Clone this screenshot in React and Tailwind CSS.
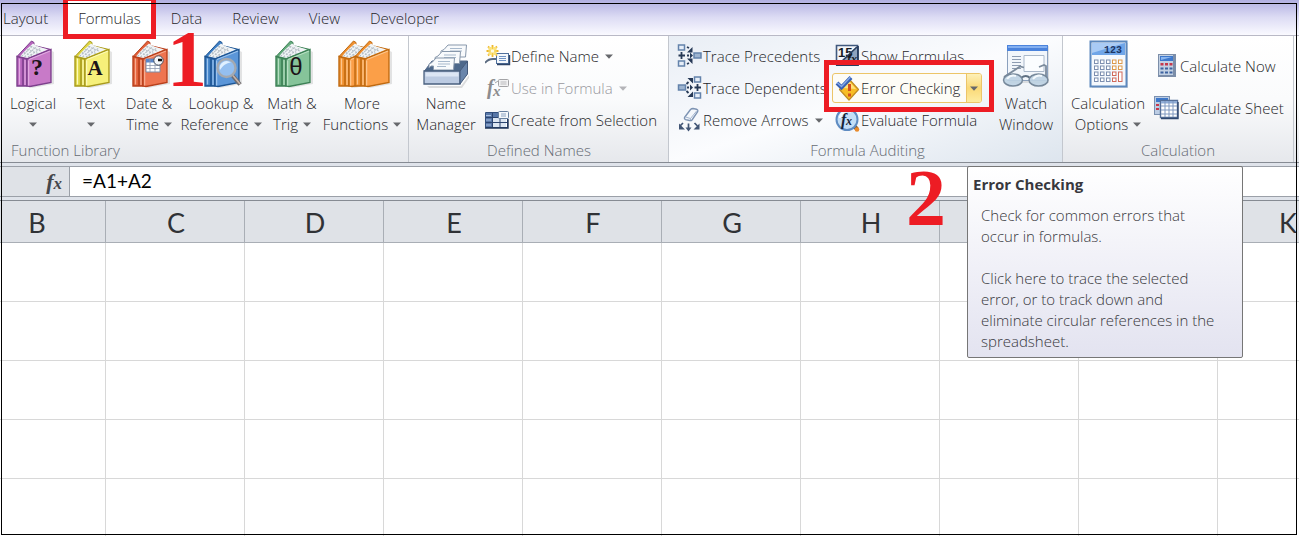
import React from "react";

function Arrow({ muted }) {
  return (
    <svg width="8" height="5" viewBox="0 0 8 5" className="shrink-0" aria-hidden="true">
      <path d="M0 0.5h8L4 4.8z" fill={muted ? "#b4b4b8" : "#66686c"} />
    </svg>
  );
}

/* ---------- large icons ---------- */

function BookShape({ c, dx = 0 }) {
  return (
    <g transform={`translate(${dx} 0)`}>
      <path d="M14 48l22-4.5V12l2 1v32l-22 4z" fill="#000" opacity=".1" />
      <path d="M1 17.500L15.500 2l2.500 1.500v3L35 10.500 11 20z" fill={c.mid} stroke={c.dark} strokeWidth="1" />
      <path d="M4 17.500C8 12 13 8 17 4.500c3 2.500 8 4 15 6L12 19z" fill="#f1f4f6" />
      <path d="M5.500 17.500L17 6.500M8.500 18L21 7.500M12 18L25 9M14 7.500l12 5M11 10.500l11 4M8 13.500l9 3.500" stroke="#b4bdc4" strokeWidth="1.100" strokeDasharray="2 1.200" fill="none" />
      <path d="M1 17.500l10 2.500v27L1 47z" fill={c.mid} stroke={c.dark} strokeWidth="1.400" />
      <path d="M11 20l24-9.500v33L14 47.500l-3-.5z" fill={c.fill} stroke={c.dark} strokeWidth="1.400" />
      <path d="M13 20.500l21-8.500" stroke={c.light} strokeWidth="1.200" fill="none" />
      <path d="M7 19.500V47" stroke={c.dark} strokeWidth="1.600" />
      <path d="M3.500 19.500v26M9 21v25M12.600 21.500v25" stroke={c.light} strokeWidth="1.300" />
    </g>
  );
}

const purple = { dark: "#7c3f8c", mid: "#b765bd", fill: "#c87ac8", light: "#e2a9e2" };
const yellow = { dark: "#a89a1c", mid: "#ddd544", fill: "#f6f07a", light: "#fdfbb8" };
const red = { dark: "#b8401c", mid: "#e2603a", fill: "#ee7450", light: "#f8ab8e" };
const blue = { dark: "#1e5593", mid: "#3f7fc4", fill: "#5b96d8", light: "#9cc4ee" };
const green = { dark: "#3c8055", mid: "#65ab7d", fill: "#86c49a", light: "#b6dfc2" };
const orange = { dark: "#c06a10", mid: "#ef9030", fill: "#fb9f48", light: "#fdc68c" };

function Book({ colors, children }) {
  return (
    <svg width="38" height="50" viewBox="-2 0 38 50" overflow="visible" aria-hidden="true">
      <BookShape c={colors} />
      {children}
    </svg>
  );
}

const Glyph = ({ children, family, size = 24, weight = 700 }) => (
  <text x="21" y="36" fontSize={size} fontWeight={weight} fontFamily={family} textAnchor="middle" fill="#1c1418">{children}</text>
);

const LogicalIcon = () => <Book colors={purple}><Glyph family="Liberation Serif, serif">?</Glyph></Book>;
const TextIcon = () => <Book colors={yellow}><Glyph family="Liberation Serif, serif" size={21}>A</Glyph></Book>;
const MathIcon = () => <Book colors={green}><Glyph family="Liberation Sans, sans-serif" weight={400}>θ</Glyph></Book>;

const DateIcon = () => (
  <Book colors={red}>
    <path d="M14 20h14v13H14z" fill="#fff" stroke="#7d8ba6" />
    <path d="M14 20h13v3.500H14z" fill="#5b86c8" />
    <path d="M14 26.500h14M14 29.500h14M18 20v13M23 20v13" stroke="#8f9bb0" strokeWidth=".8" />
    <circle cx="26.500" cy="21.500" r="4.700" fill="#f4f7fb" stroke="#46505f" strokeWidth="1" />
    <path d="M26 21h4" stroke="#111" strokeWidth="2.500" fill="none" />
  </Book>
);

const LookupIcon = () => (
  <Book colors={blue}>
    <path d="M28.500 36.500l7.500 9" stroke="#6c6c70" strokeWidth="4" />
    <path d="M29 36.500l7 8.500" stroke="#c9b3a8" strokeWidth="1.600" />
    <circle cx="22.500" cy="29" r="9" fill="#9ac3f3" fillOpacity=".9" stroke="#a4a9b0" strokeWidth="2.400" />
    <path d="M16 31a7 7 0 0 1 11-7.500c-5 .5-8 3-11 7.500z" fill="#e0f0ff" />
  </Book>
);

const MoreIcon = () => (
  <svg width="52" height="50" viewBox="0 0 52 50" overflow="visible" aria-hidden="true">
    <BookShape c={orange} dx={2} />
    <BookShape c={orange} dx={18} />
  </svg>
);

const NameManagerIcon = () => (
  <svg width="46" height="50" viewBox="0 0 46 50" aria-hidden="true">
    <path d="M4 47h34l8-11v3l-7 10H6z" fill="#000" opacity=".12" />
    <path d="M1.500 32L9 22h35.500L37 32z" fill="#4d688b" stroke="#52688a" />
    {[[23, 6], [17, 12.500], [11, 19]].map(([x, y]) => (
      <g key={x}>
        <path d={`M${x + 2} ${y}h18.500l-1 12h-20v-4h-2.500l-2 2v-4l3-1.500z`} fill="#f8fafc" stroke="#8797ab" />
        <path d={`M${x + 4} ${y + 3.500}h12M${x + 4} ${y + 6}h12M${x + 3} ${y + 8.500}h9`} stroke="#a8b9cc" />
      </g>
    ))}
    <path d="M1 32h36v13H1z" fill="#bccbe2" stroke="#4a607f" strokeWidth="1.300" />
    <path d="M2.500 33.500h33v4h-33z" fill="#dce6f4" />
    <path d="M37 32l7.500-10v13L37 45z" fill="#6985ab" stroke="#43597a" />
  </svg>
);

const WatchIcon = () => (
  <svg width="48" height="50" viewBox="0 0 48 50" aria-hidden="true">
    <path d="M7 7h40v37H7z" fill="#000" opacity=".1" />
    <path d="M5.500 6.500h40v35h-40z" fill="#f2f6fb" stroke="#8ba0bd" />
    <path d="M5 6h41v6H5z" fill="#4b83dc" />
    <path d="M6 7h39v2H6z" fill="#83aff0" />
    <path d="M10 17.500h9M10 20.500h9M10 23.500h9M10 26.500h9M10 29.500h9" stroke="#8d9cb2" />
    <path d="M22 16.500h20v16H22z" fill="#fbfdff" stroke="#aab8ca" />
    <path d="M2 38L18 27.500l4 1M44 38V27l-2-1-5 2" stroke="#7c8b9c" strokeWidth="1.800" fill="none" />
    <path d="M19 39q5-4 9 0" stroke="#5f7082" strokeWidth="1.800" fill="none" />
    <ellipse cx="11" cy="41" rx="9.500" ry="6" fill="#bcd1e2" fillOpacity=".9" stroke="#76889a" strokeWidth="1.500" />
    <ellipse cx="36.500" cy="41" rx="9.500" ry="6" fill="#bcd1e2" fillOpacity=".9" stroke="#76889a" strokeWidth="1.500" />
    <path d="M5 40q4-5 9-3M31 40q4-5 9-3" stroke="#f3f9fd" strokeWidth="2" fill="none" />
  </svg>
);

const CalcOptionsIcon = () => (
  <svg width="40" height="50" viewBox="-1 -1 40 50" aria-hidden="true">
    <path d="M3 3h36v45H3z" fill="#000" opacity=".12" />
    <path d="M1.500 1.500h36v45h-36z" fill="#f4f8fd" stroke="#5c88bd" strokeWidth="2" />
    <path d="M3 3h33v12H3z" fill="#6fa5e8" />
    <path d="M3 3h33L3 13z" fill="#a9cbf5" />
    <text x="33" y="13" fontSize="10" fontWeight="700" fontFamily="Liberation Mono, monospace" textAnchor="end" fill="#1d3765">123</text>
    {[0, 1, 2, 3].map((r) =>
      [0, 1, 2, 3, 4].map((k) =>
        k === 4 && r === 3 ? null : (
          <rect key={`${r}-${k}`} x={5.500 + k * 6} y={20 + r * 6} width="3.500" height={k === 4 && r === 2 ? 9.500 : 3.500} fill="#fff" stroke={k < 3 ? "#7d8fb0" : r < 2 ? "#dc9a4c" : "#d0695a"} />
        )
      )
    )}
  </svg>
);

/* ---------- small icons ---------- */

const Small = ({ children }) => (
  <svg width="26" height="26" viewBox="0 0 26 26" className="shrink-0" aria-hidden="true">{children}</svg>
);

const DefineIcon = () => (
  <Small>
    <path d="M0 20q3-4 8-4h3" stroke="#5b6b80" strokeWidth="1.800" fill="none" />
    <rect x="11.500" y="10.500" width="12" height="10" fill="#f4f8fc" stroke="#50709c" />
    <path d="M14 13.500h7M14 15.500h7M14 17.500h7" stroke="#6f93c4" />
    <path d="M12 21.500h12.500V12" stroke="#2d4468" fill="none" strokeWidth="1.400" />
    <path d="M7.500 2v12M1.500 8h12M3 3.500l9 9M12 3.500l-9 9" stroke="#edb72e" strokeWidth="1.800" />
    <path d="M3.500 4h8v8h-8z" fill="#fbe27a" />
    <path d="M7.500 4v8M3.500 8h8" stroke="#f3c945" />
    <circle cx="7.500" cy="8" r="1.800" fill="#fffbe0" />
  </Small>
);

const UseInFormulaIcon = () => (
  <Small>
    <text x="2" y="19" fontSize="20" fontStyle="italic" fontWeight="700" fontFamily="Liberation Serif, serif" fill="#8c8c8e">f</text>
    <text x="8" y="21" fontSize="15" fontStyle="italic" fontWeight="700" fontFamily="Liberation Serif, serif" fill="#8c8c8e">x</text>
    <rect x="13.500" y="4.500" width="10" height="7" rx="1" fill="#f2f2f3" stroke="#a3a3a6" />
    <path d="M15.500 7h6M15.500 9h6" stroke="#b9b9bc" />
    <path d="M10 8l3-2" stroke="#a3a3a6" />
  </Small>
);

const CreateIcon = () => (
  <Small>
    <path d="M0.500 5.500h22v15h-22z" fill="#fff" stroke="#324f7d" />
    <path d="M1 6h21v4H1zM1 6h6v14H1z" fill="#5877a8" />
    <path d="M8 11h13v9H8z" fill="#dce6f2" />
    <path d="M1 10.500h22M1 15.500h22M7.500 6v14M15 6v14" stroke="#2c4570" />
    <path d="M1 8.500h5M1 13h5M1 18h5" stroke="#aac0e0" />
    <rect x="13.500" y="4.500" width="10" height="7" rx="1" fill="#f5f8fb" stroke="#67809f" />
    <path d="M16 7h5M16 9h5" stroke="#8ba3c2" />
    <path d="M0 21h23v-9" stroke="#1e3458" strokeWidth="1.400" fill="none" />
  </Small>
);

const Sq = ({ x, y, w = 6, f = "#e6eef8" }) => (
  <rect x={x} y={y} width={w} height="5" fill={f} stroke="#6382ab" strokeWidth="1.500" />
);

const PrecedentsIcon = () => (
  <Small>
    <Sq x={1.500} y={2} /><Sq x={1.500} y={18} /><Sq x={17} y={10} w={7} f="#9db4d0" />
    <path d="M4.500 9v7M1.500 12.500h6.500" stroke="#263956" strokeWidth="1.800" />
    <path d="M10 4l2 1M10 21l2-1M10 12.500h2" stroke="#263956" strokeWidth="1.800" />
    <path d="M15.500 4v5.500H10zM15.500 21v-5.500H10zM13 9.500l3 3-3 3z" fill="#263956" />
  </Small>
);

const DependentsIcon = () => (
  <Small>
    <Sq x={17.500} y={2} /><Sq x={17.500} y={18} /><Sq x={1.500} y={10} w={7} f="#9db4d0" />
    <path d="M20.500 9v7M17.500 12.500h6.500" stroke="#263956" strokeWidth="1.800" />
    <path d="M9.500 9l2-2M9.500 16l2 2M10 12.500h2" stroke="#263956" strokeWidth="1.800" />
    <path d="M10.500 3H16v5.500zM10.500 22H16v-5.500zM13 9.500l3 3-3 3z" fill="#263956" />
  </Small>
);

const RemoveIcon = () => (
  <Small>
    <path d="M7.500 10.500L13.500 2.500q1-1 2.500-1l3.500.7q2 .8 1 2.800L15 13q-1 1-2.500.500l-4-.8q-1.500-.7-1-2.200z" fill="#f4f7fb" stroke="#7d93b3" strokeWidth="1.400" />
    <path d="M8.500 10l5 1.500 6.500-8M13.500 11.500v1.500" stroke="#a3b5cf" fill="none" />
    <path d="M6 16l-3 3M11.500 16.500v5M17.500 16l3 3" stroke="#415575" strokeWidth="1.700" />
    <path d="M2 16.500v6h6zM8.500 20.500h6l-3 4zM22.500 16.500v6h-6z" fill="#415575" />
  </Small>
);

const ShowIcon = () => (
  <Small>
    <path d="M1.500 2.500h21v19h-21z" fill="#f3f6fa" stroke="#40597e" strokeWidth="1.600" />
    <path d="M3 21L22 3v18z" fill="#8ea3bf" />
    <text x="3" y="14" fontSize="13" fontWeight="700" fontFamily="Liberation Sans, sans-serif" fill="#171b22">15</text>
    <path d="M4 21L22 4" stroke="#2b3f5e" strokeWidth="1.600" />
    <text x="12" y="20" fontSize="12" fontWeight="700" fontStyle="italic" fontFamily="Liberation Serif, serif" fill="#171b22">fx</text>
    <path d="M1 22h22V3" stroke="#273d60" strokeWidth="1.800" fill="none" />
  </Small>
);

const ErrorIcon = () => (
  <Small>
    <path d="M14 4l9.500 10.500L14 25 4.500 14.500z" fill="#f8bd25" stroke="#c08c22" strokeWidth="1.200" strokeLinejoin="round" />
    <path d="M14 6l7 8-13-1z" fill="#ffe27a" />
    <path d="M14.500 9v7M14.500 18.500v3" stroke="#d2501e" strokeWidth="3" />
    <path d="M2 8l4.500 4.500L16 2.500" stroke="#3a62b4" strokeWidth="4" fill="none" />
    <path d="M2 7.500l4.500 4L15.500 2" stroke="#85a9e8" strokeWidth="1.400" fill="none" />
  </Small>
);

const EvaluateIcon = () => (
  <Small>
    <path d="M18 18l4 4" stroke="#8a5a28" strokeWidth="4" />
    <circle cx="22" cy="22.500" r="2.300" fill="#e98b2c" />
    <circle cx="12" cy="12.500" r="10.500" fill="#c4def6" stroke="#5f8cc2" strokeWidth="2" />
    <path d="M5 11a7.500 7.500 0 0 1 11-6" stroke="#f6fbff" strokeWidth="2.500" fill="none" />
    <text x="6" y="18" fontSize="16" fontStyle="italic" fontWeight="700" fontFamily="Liberation Serif, serif" fill="#15233a">f</text>
    <text x="11" y="18" fontSize="12" fontStyle="italic" fontWeight="700" fontFamily="Liberation Serif, serif" fill="#15233a">x</text>
  </Small>
);

const CalcNowIcon = () => (
  <Small>
    <path d="M4 1h18v23H4z" fill="#7c8ea9" />
    <path d="M5 2h14v20H5z" fill="#c3d1e3" />
    <path d="M6 3h13v5H6z" fill="#3d78cc" />
    <path d="M7 4h11L7 7z" fill="#8bb6ee" />
    <path d="M6.500 10h3v2.500h-3zM11 10h3v2.500h-3zM15.500 10h3v2.500h-3z" fill="#c5384c" />
    <path d="M6.500 14.500h3v2h-3zM11 14.500h3v2h-3zM15.500 14.500h3v2h-3zM6.500 18.500h3v2h-3zM11 18.500h3v2h-3zM15.500 18.500h3v2h-3z" fill="#3c62a0" />
  </Small>
);

const CalcSheetIcon = () => (
  <Small>
    <path d="M0 1h16v19H0z" fill="#7a90b0" />
    <path d="M1 2h14v17H1z" fill="#bccde4" />
    <path d="M2 3h12v4H2z" fill="#3d78cc" />
    <path d="M2 9h3v2H2zM2 13h3v2H2z" fill="#c5384c" />
    <path d="M6.500 5.500h17v17h-17z" fill="#fff" stroke="#567099" strokeWidth="1.400" />
    <path d="M7 6h16v2.500H7z" fill="#8facd6" />
    <path d="M7 11h16M7 15h16M7 19h16M11 6v16M15 6v16M19 6v16" stroke="#7e98c0" />
    <path d="M7 23.500h17V7" stroke="#2f4870" strokeWidth="1.400" fill="none" />
  </Small>
);

/* ---------- ribbon parts ---------- */

function BigButton({ icon, lines, arrow, className }) {
  const [first, second] = lines;
  return (
    <button type="button" className={`flex shrink-0 flex-col items-center whitespace-nowrap pt-[3px] leading-[21px] ${className}`}>
      {icon}
      <span className="mt-1">{first}</span>
      <span className="flex h-[21px] items-center gap-[5px]">
        {second}
        {arrow && <Arrow />}
      </span>
    </button>
  );
}

function SmallButton({ icon, label, arrow, muted, tall }) {
  return (
    <button
      type="button"
      disabled={muted}
      className={`flex items-center whitespace-nowrap ${tall ? "h-[42px]" : "h-8"} ${muted ? "text-[#98989e]" : ""}`}
    >
      {icon}
      <span>{label}</span>
      {arrow && <span className="ml-[6px]"><Arrow muted={muted} /></span>}
    </button>
  );
}

function Group({ title, children, className }) {
  return (
    <section className={`flex shrink-0 flex-col justify-between border-r border-[#c3c7ce] ${className}`}>
      <div className="flex">{children}</div>
      <h2 className="h-6 text-center leading-6 text-[#666b74]">{title}</h2>
    </section>
  );
}

function Tab({ label, active }) {
  return (
    <button
      type="button"
      role="tab"
      aria-selected={!!active}
      className={`relative h-full px-[15px] pt-px ${active ? "bg-white" : ""}`}
    >
      {label}
      {active && <span className="absolute -top-1 -bottom-1 left-0 right-0 z-20 border-[5px] border-[#ed1c24]" />}
    </button>
  );
}

/* The tooltip lies over the headings of columns I and J. */
const columns = ["B", "C", "D", "E", "F", "G", "H", "", "", "K"];
const rows = [1, 2, 3, 4, 5];

export default function App() {
  return (
    <div className="relative flex h-screen flex-col overflow-hidden bg-white font-['Open_Sans',sans-serif] text-[15px] font-light text-[#26262a]">
      <div role="tablist" className="flex h-9 shrink-0 border-b border-[#b9b9c6] bg-linear-to-b from-[#b1afe1] via-[#dddcf4] to-[#fafaff]">
        <div className="-ml-3 flex">
          <Tab label="Layout" />
          <Tab label="Formulas" active />
          <Tab label="Data" />
          <Tab label="Review" />
          <Tab label="View" />
          <Tab label="Developer" />
        </div>
      </div>

      <div className="flex h-[127px] shrink-0 border-b border-[#868b93] bg-linear-to-b from-white via-[#fafbfc] to-[#e6e8ec]">
        <Group title={<span className="block pl-[7px] text-left">Function Library</span>} className="pl-1 pr-1">
          <BigButton icon={<LogicalIcon />} lines={["Logical"]} arrow className="w-[58px]" />
          <BigButton icon={<TextIcon />} lines={["Text"]} arrow className="w-[58px]" />
          <BigButton icon={<DateIcon />} lines={["Date &", "Time"]} arrow className="w-[58px]" />
          <BigButton icon={<LookupIcon />} lines={["Lookup &", "Reference"]} arrow className="w-[86px]" />
          <BigButton icon={<MathIcon />} lines={["Math &", "Trig"]} arrow className="w-[56px]" />
          <BigButton icon={<MoreIcon />} lines={["More", "Functions"]} arrow className="w-[84px]" />
        </Group>

        <Group title="Defined Names" className="w-[260px] pl-1 pr-[3px]">
          <BigButton icon={<NameManagerIcon />} lines={["Name", "Manager"]} className="w-[66px]" />
          <div className="ml-[6px] flex flex-col items-start pt-1">
            <SmallButton icon={<DefineIcon />} label="Define Name" arrow />
            <SmallButton icon={<UseInFormulaIcon />} label="Use in Formula" arrow muted />
            <SmallButton icon={<CreateIcon />} label="Create from Selection" />
          </div>
        </Group>

        <Group title="Formula Auditing" className="w-[394px] bg-linear-to-br from-[#e9eef5] via-[#fbfcfe] to-[#dde5ee] pl-2 pr-1">
          <div className="flex w-[158px] flex-col items-start pt-1">
            <SmallButton icon={<PrecedentsIcon />} label="Trace Precedents" />
            <SmallButton icon={<DependentsIcon />} label="Trace Dependents" />
            <SmallButton icon={<RemoveIcon />} label="Remove Arrows" arrow />
          </div>
          <div className="flex flex-col items-start pt-1">
            <SmallButton icon={<ShowIcon />} label="Show Formulas" />
            <div className="relative -ml-[3px] flex h-8 items-center">
              <span className="pointer-events-none absolute -left-2 -right-3 -top-3 -bottom-2 z-20 border-[5px] border-[#ed1c24]" />
              <div className="flex h-[30px] w-[150px] overflow-hidden rounded-[3px] border border-[#ecc568] bg-[#fdfcf6]">
                <button type="button" className="flex flex-1 items-center whitespace-nowrap pl-[2px]">
                  <ErrorIcon />
                  <span>Error Checking</span>
                </button>
                <button type="button" aria-label="Error Checking options" className="flex w-[15px] items-center justify-center border-l border-[#ecc568] bg-linear-to-b from-[#fdf0b8] via-[#fad976] to-[#fdeca0]">
                  <Arrow />
                </button>
              </div>
            </div>
            <SmallButton icon={<EvaluateIcon />} label="Evaluate Formula" />
          </div>
          <BigButton icon={<WatchIcon />} lines={["Watch", "Window"]} className="-mr-1 ml-auto w-[72px]" />
        </Group>

        <Group title="Calculation" className="w-[231px] pl-1 pr-1">
          <BigButton icon={<CalcOptionsIcon />} lines={["Calculation", "Options"]} arrow className="w-[82px]" />
          <div className="ml-[5px] flex flex-col items-start pt-[9px]">
            <SmallButton icon={<CalcNowIcon />} label="Calculate Now" tall />
            <SmallButton icon={<CalcSheetIcon />} label="Calculate Sheet" tall />
          </div>
        </Group>
      </div>

      <div className="flex h-[38px] shrink-0 border-b border-[#868b93] bg-[#dfe3ea] pt-[3px] pb-[3px]">
        <div className="flex flex-1 border-y border-[#9ba0a8] bg-white">
          <button type="button" aria-label="Insert Function" className="flex w-[70px] items-center justify-end border-r border-[#9ba0a8] bg-[#dfe2e7] pr-[7px]">
            <span className="font-['Liberation_Serif',serif] text-[22px] font-bold italic leading-none text-[#45474b]">
              f<span className="text-[17px]">x</span>
            </span>
          </button>
          <input
            aria-label="Formula"
            defaultValue="=A1+A2"
            className="min-w-0 flex-1 bg-white pl-3 font-[Lato,sans-serif] text-[19px] font-normal text-black outline-none"
          />
        </div>
      </div>

      <div className="min-h-0 flex-1 overflow-hidden">
        <table className="-ml-[33px] w-[1390px] table-fixed border-separate border-spacing-0">
          <thead>
            <tr>
              {columns.map((c, i) => (
                <th key={i} scope="col" className="h-[42px] border-r border-b border-[#a9aeb5] bg-[#dfe2e7] p-0 pt-[2px] pl-[2px] font-[Lato,sans-serif] text-[27px] font-normal leading-none text-[#303236]">
                  {c}
                </th>
              ))}
            </tr>
          </thead>
          <tbody>
            {rows.map((r) => (
              <tr key={r}>
                {columns.map((c, i) => (
                  <td key={i} className="h-[59px] border-r border-b border-[#d8d8d8] p-0" />
                ))}
              </tr>
            ))}
          </tbody>
        </table>
      </div>

      <div role="tooltip" className="absolute left-[967px] top-[166px] w-[276px] rounded-[2px] border border-[#767676] bg-linear-to-b from-white to-[#e3e3f0] pt-[7px] pb-[5px] leading-[21px] text-[#38383d]">
        <p className="pl-[5px] font-bold">Error Checking</p>
        <div className="pl-[13px] pr-4 pt-[10px]">
          <p>Check for common errors that occur in formulas.</p>
          <p className="mt-[21px]">Click here to trace the selected error, or to track down and eliminate circular references in the spreadsheet.</p>
        </div>
      </div>

      <span className="absolute left-[167px] top-[19px] z-20 font-['Liberation_Serif',serif] text-[80px] font-bold leading-[80px] text-[#ed1c24]">1</span>
      <span className="absolute left-[906px] top-[158px] z-20 font-['Liberation_Serif',serif] text-[80px] font-bold leading-[80px] text-[#ed1c24]">2</span>

      <div className="pointer-events-none absolute bottom-px left-px right-[2px] top-[3px] z-30 border border-black" />
    </div>
  );
}
